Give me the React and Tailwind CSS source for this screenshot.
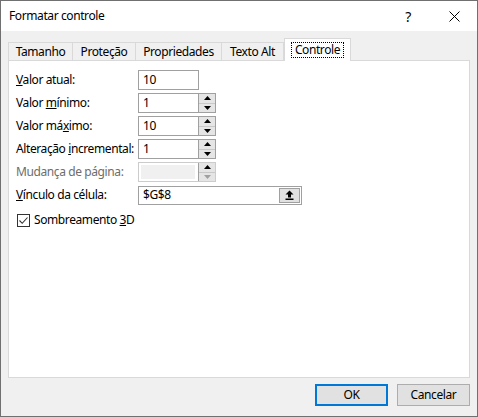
import React from 'react';

const font = { fontFamily: '"Segoe UI", "Noto Sans", "Liberation Sans", sans-serif' };

const Arrow = ({ dir = 'up', color = '#000' }) => (
    <svg width="7" height="4" viewBox="0 0 7 4" className="block">
        {dir === 'up'
            ? <polygon points="3.5,0 7,4 0,4" fill={color} />
            : <polygon points="0,0 7,0 3.5,4" fill={color} />}
    </svg>
);

const Spin = ({ value, disabled }) => (
    <div className={`flex w-[78px] h-[20px] border ${disabled ? 'border-[#cccccc]' : 'border-[#a0a0a0]'}`}>
        <div className={`flex-1 flex items-center pl-[4px] text-[12px] text-black ${disabled ? 'bg-[#f0f0f0] m-[2px] mr-[3px]' : 'bg-white'}`}>{value}</div>
        <div className="w-[17px] flex flex-col border-l border-[#a0a0a0] bg-[#f0f0f0]">
            <div className="flex-1 flex items-center justify-center border-b border-[#c8c8c8] bg-[#e5e5e5]">
                <Arrow dir="up" />
            </div>
            <div className="flex-1 flex items-center justify-center bg-[#e5e5e5]">
                <Arrow dir="down" color={disabled ? '#a0a0a0' : '#000'} />
            </div>
        </div>
    </div>
);

const Row = ({ label, disabled, children }) => (
    <div className="flex items-center h-[20px]">
        <div className={`w-[122px] whitespace-nowrap text-[12px] ${disabled ? 'text-[#6d6d6d]' : 'text-black'}`}>{label}</div>
        {children}
    </div>
);

const tabs = [
    { name: 'Tamanho', w: 'w-[65px] border-l' },
    { name: 'Proteção', w: 'w-[63px]' },
    { name: 'Propriedades', w: 'w-[86px]' },
    { name: 'Texto Alt', w: 'w-[62px]' },
];

export default function App() {
    return (
        <div style={font} className="w-[478px] h-[417px] border border-[#707070] flex flex-col bg-[#f0f0f0] text-black tracking-[-0.4px]">
            {/* title bar */}
            <div className="h-[30px] bg-white flex items-center pl-[8px]">
                <span className="text-[12px] flex-1">Formatar controle</span>
                <span className="text-[14px] w-[16px] mr-[33px] text-center">?</span>
                <svg width="11" height="11" viewBox="0 0 11 11" className="mr-[17px]">
                    <path d="M0.5 0.5 L10.5 10.5 M10.5 0.5 L0.5 10.5" stroke="#000" strokeWidth="1" />
                </svg>
            </div>

            <div className="flex-1 flex flex-col px-[7px] pt-[7px]">
                {/* tabs */}
                <div className="flex items-end h-[22px]">
                    {tabs.map((t) => (
                        <div key={t.name} className={`${t.w} h-[18px] border-t border-r border-[#d9d9d9] bg-[#f0f0f0] flex items-center justify-center text-[12px] whitespace-nowrap`}>
                            {t.name}
                        </div>
                    ))}
                    <div className="relative z-10 -mb-px w-[67px] h-[23px] border-t border-l border-r border-[#d9d9d9] bg-white flex items-center justify-center text-[12px]">
                        <span className="border border-dotted border-black px-[3px] leading-[14px]">Controle</span>
                    </div>
                </div>

                {/* panel */}
                <div className="h-[318px] w-[462px] border border-[#d9d9d9] bg-white pl-[7px] pt-[9px] flex flex-col">
                    <div className="flex flex-col gap-[3px]">
                        <Row label={<><u>V</u>alor atual:</>}>
                            <div className="w-[61px] h-[20px] border border-[#a0a0a0] flex items-center pl-[4px] text-[12px]">10</div>
                        </Row>
                        <Row label={<>Valor <u>m</u>ínimo:</>}><Spin value="1" /></Row>
                        <Row label={<>Valor má<u>x</u>imo:</>}><Spin value="10" /></Row>
                        <Row label={<>Alteração <u>i</u>ncremental:</>}><Spin value="1" /></Row>
                        <Row label="Mudança de página:" disabled><Spin value="" disabled /></Row>
                        <Row label={<><u>V</u>ínculo da célula:</>}>
                            <div className="w-[164px] h-[19px] border border-[#a0a0a0] flex">
                                <div className="flex-1 flex items-center pl-[4px] text-[12px]">$G$8</div>
                                <div className="w-[21px] m-[1px] border border-[#a0a0a0] bg-[#e1e1e1] flex items-center justify-center">
                                    <svg width="9" height="10" viewBox="0 0 9 10">
                                        <path d="M4.5 0.5 L8.5 4.5 L6 4.5 L6 7.5 L3 7.5 L3 4.5 L0.5 4.5 Z" fill="#000" />
                                        <rect x="0.5" y="8.5" width="8" height="1.5" fill="#000" />
                                    </svg>
                                </div>
                            </div>
                        </Row>
                    </div>

                    <div className="flex items-center mt-[6px] ml-[1px]">
                        <div className="w-[13px] h-[13px] border border-[#333333] bg-white flex items-center justify-center">
                            <svg width="11" height="11" viewBox="0 0 11 11">
                                <path d="M1.5 5.5 L4.2 8.3 L9.5 2.5" stroke="#333" strokeWidth="1.1" fill="none" />
                            </svg>
                        </div>
                        <span className="ml-[4px] text-[12px]">Sombreamento <u>3</u>D</span>
                    </div>
                </div>

                {/* buttons */}
                <div className="flex justify-end gap-[9px] mt-[6px]">
                    <div className="w-[73px] h-[22px] border-2 border-[#0078d7] bg-[#e1e1e1] flex items-center justify-center text-[12px]">OK</div>
                    <div className="w-[73px] h-[22px] border border-[#adadad] bg-[#e1e1e1] flex items-center justify-center text-[12px]">Cancelar</div>
                </div>
            </div>
        </div>
    );
}
